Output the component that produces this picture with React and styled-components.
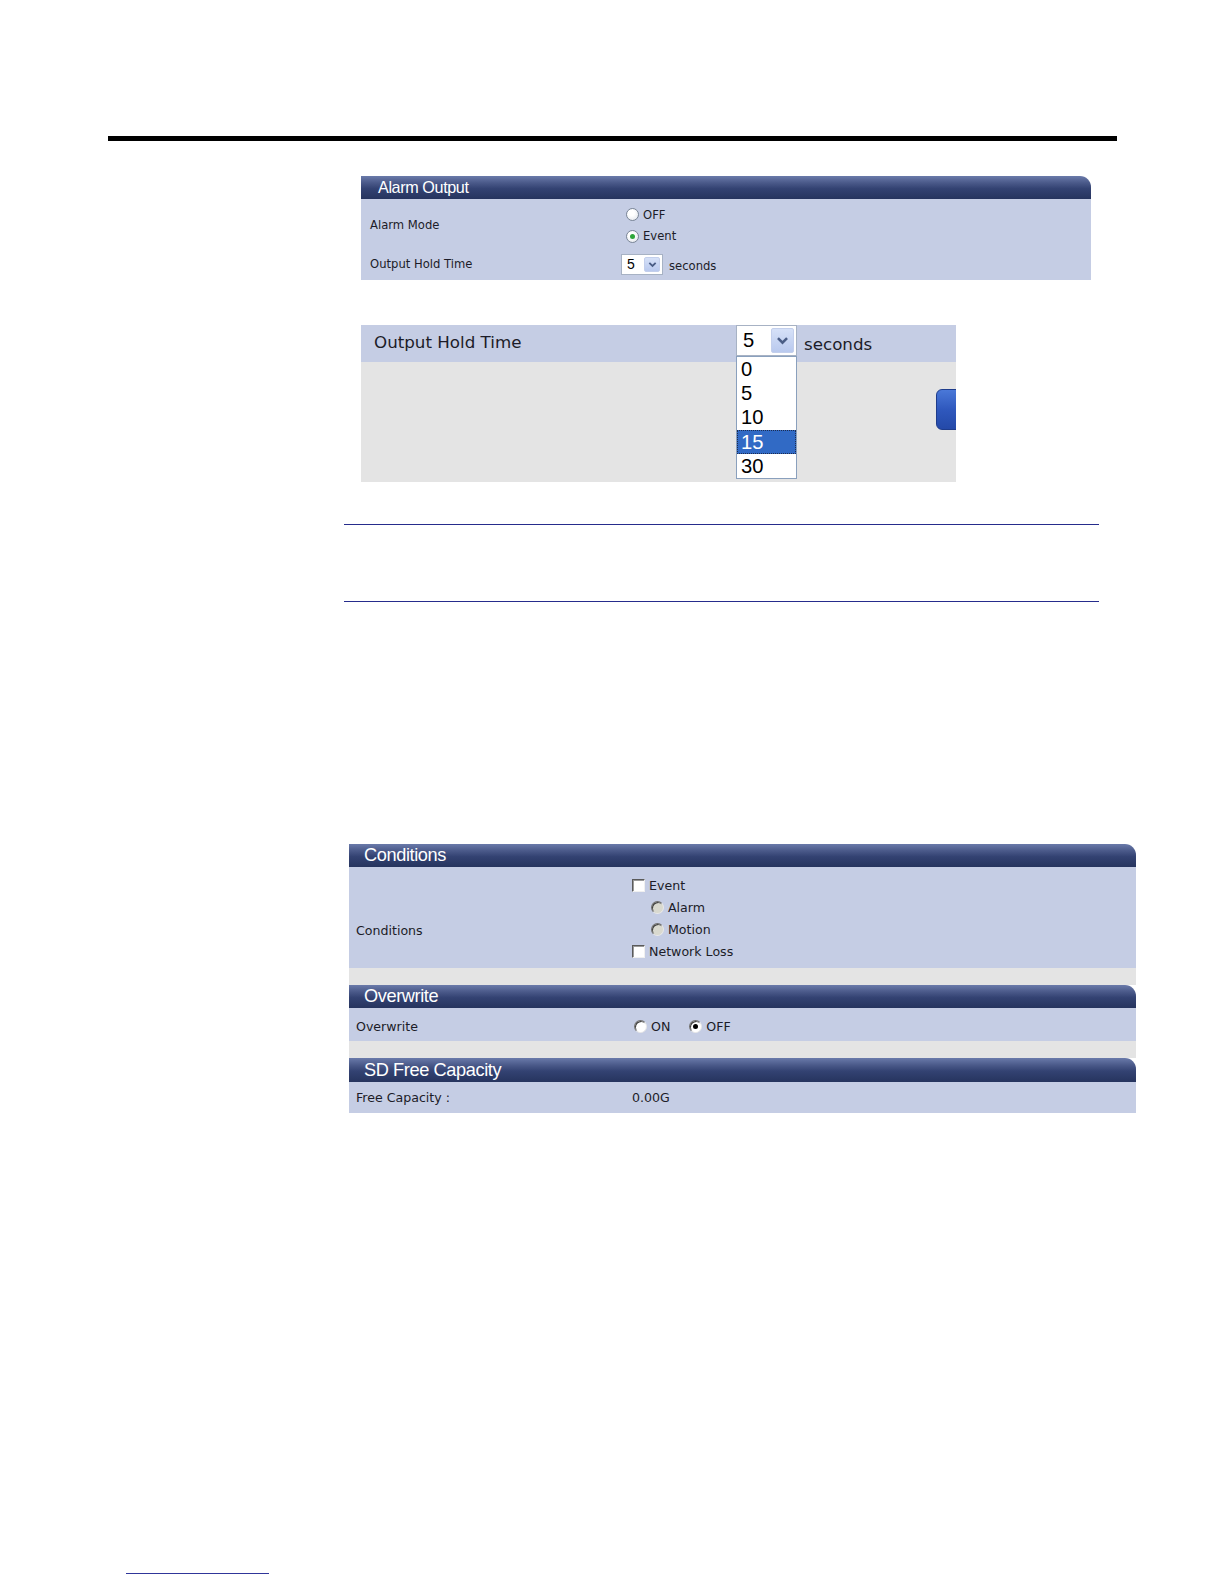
import React from "react";
import styled, { createGlobalStyle, css } from "styled-components";

const GlobalStyle = createGlobalStyle`
  html, body {
    margin: 0;
    padding: 0;
    background: #ffffff;
  }
`;

const Page = styled.div`
  width: 1224px;
  min-height: 1584px;
  padding-top: 136px;
  box-sizing: border-box;
  overflow: hidden;
`;

const TopRule = styled.div`
  margin-left: 108px;
  width: 1009px;
  height: 5px;
  background: #000;
`;

const Panel = styled.div`
  margin-left: ${p => p.left}px;
  margin-top: ${p => p.top}px;
  width: ${p => p.width}px;
  position: relative;
  overflow: ${p => (p.clip ? "hidden" : "visible")};
`;

const Header = styled.div`
  height: ${p => p.h || 23}px;
  line-height: ${p => p.h || 23}px;
  padding-left: ${p => p.indent || 15}px;
  border-top-right-radius: 11px;
  background: linear-gradient(#6a7aaa 0%, #4a5989 30%, #334272 55%, #26345e 100%);
  color: #fff;
  font-family: "Liberation Sans", Arial, sans-serif;
  font-size: ${p => p.size || 18.2}px;
  letter-spacing: -0.4px;
`;

const Body = styled.div`
  background: #c5cde4;
`;

const Row = styled.div`
  display: grid;
  grid-template-columns: ${p => p.labelWidth}px 1fr;
  align-items: center;
  height: ${p => p.h}px;
  padding-top: ${p => p.pt || 0}px;
  box-sizing: border-box;
`;

const Label = styled.div`
  padding-left: ${p => p.indent || 7}px;
  font-family: "DejaVu Sans", Verdana, sans-serif;
  font-size: ${p => p.size || 12.6}px;
  color: #1c1c28;
  align-self: ${p => (p.shift ? "start" : "center")};
  margin-top: ${p => p.shift || 0}px;
`;

const Options = styled.div`
  display: flex;
  flex-direction: ${p => (p.inline ? "row" : "column")};
  align-items: ${p => (p.inline ? "center" : "flex-start")};
  gap: ${p => (p.inline ? "19px" : "0")};
  padding-top: ${p => p.pt || 0}px;
  font-family: "DejaVu Sans", Verdana, sans-serif;
  font-size: ${p => p.size || 12.6}px;
  color: #1c1c28;
`;

const Option = styled.div`
  display: flex;
  align-items: center;
  gap: 4px;
  height: ${p => p.lh || 22.2}px;
  padding-left: ${p => p.indent || 0}px;
`;

const Radio = styled.span`
  position: relative;
  width: 13px;
  height: 13px;
  border-radius: 50%;
  box-sizing: border-box;
  flex: none;
  ${p =>
    p.classic
      ? css`
          border: 1px solid;
          border-color: #6e6e6e #e8e8e8 #e8e8e8 #6e6e6e;
          background: ${p.disabled ? "#d9d9cf" : "#fff"};
          box-shadow: inset 1px 1px 0 #404040;
        `
      : css`
          border: 1px solid #7a8596;
          background: radial-gradient(circle at 40% 35%, #ffffff 30%, #dde1e8 100%);
        `}
  &::after {
    content: "";
    display: ${p => (p.checked ? "block" : "none")};
    position: absolute;
    left: 50%;
    top: 50%;
    width: 5px;
    height: 5px;
    margin: -2.5px 0 0 -2.5px;
    border-radius: 50%;
    background: ${p => (p.classic ? "#000" : "#2fa63a")};
  }
`;

const Check = styled.span`
  width: 13px;
  height: 13px;
  box-sizing: border-box;
  flex: none;
  background: #fff;
  border: 1px solid;
  border-color: #5a5a5a #f0f0f0 #f0f0f0 #5a5a5a;
  box-shadow: inset 1px 1px 0 #9a9a9a;
`;

const SmallSelect = styled.div`
  display: flex;
  align-items: center;
  gap: 6px;
  font-family: "DejaVu Sans", Verdana, sans-serif;
  font-size: 11.6px;
  color: #1c1c28;
  & > span:last-child {
    padding-top: 3px;
  }
`;

const SelectBox = styled.div`
  position: relative;
  display: flex;
  align-items: center;
  justify-content: space-between;
  box-sizing: border-box;
  width: ${p => p.w}px;
  height: ${p => p.h}px;
  padding: ${p => p.pad}px;
  padding-left: ${p => p.padLeft}px;
  background: #fff;
  border: 1px solid #a7b2c4;
  font-family: "Liberation Sans", Arial, sans-serif;
  font-size: ${p => p.font}px;
  color: #000;
`;

const ArrowBtn = styled.span`
  display: flex;
  align-items: center;
  justify-content: center;
  width: ${p => p.w}px;
  height: 100%;
  border-radius: 2px;
  background: linear-gradient(#d6e1f8, #b9c9ee);
  border: 1px solid #c3cfec;
  box-sizing: border-box;
`;

const Chevron = ({ size }) => (
  <svg width={size} height={size} viewBox="0 0 10 10">
    <path d="M1.5 3.2 L5 6.6 L8.5 3.2" fill="none" stroke="#4a5d86" strokeWidth="2" />
  </svg>
);

const Seconds = styled.span`
  padding-left: 7px;
  font-family: "DejaVu Sans", Verdana, sans-serif;
  font-size: 16.7px;
  color: #1c1c28;
`;

const ZoomTop = styled.div`
  display: grid;
  grid-template-columns: 375px 61px 1fr;
  align-items: center;
  height: 37px;
  background: #c5cde4;
`;

const ZoomLabel = styled.div`
  padding-left: 13px;
  padding-bottom: 3px;
  font-family: "DejaVu Sans", Verdana, sans-serif;
  font-size: 16.7px;
  color: #1c1c28;
`;

const SelectCell = styled.div`
  position: relative;
  align-self: start;
`;

const List = styled.ul`
  position: absolute;
  left: 0;
  top: 31px;
  width: 61px;
  margin: 0;
  padding: 0;
  list-style: none;
  box-sizing: border-box;
  background: #fff;
  border: 1px solid #8aa0bd;
  z-index: 2;
`;

const Item = styled.li`
  height: 24.2px;
  line-height: 25px;
  padding-left: 4px;
  box-sizing: border-box;
  font-family: "Liberation Sans", Arial, sans-serif;
  font-size: 20.2px;
  color: ${p => (p.active ? "#fff" : "#000")};
  background: ${p => (p.active ? "#316ac5" : "transparent")};
  outline: ${p => (p.active ? "1px dotted #1c2c50" : "none")};
  outline-offset: -1px;
`;

const ZoomRest = styled.div`
  height: 120px;
  background: #e4e4e4;
  display: flex;
  justify-content: flex-end;
  padding-top: 27px;
  box-sizing: border-box;
`;

const BlueButton = styled.div`
  width: 80px;
  height: 39px;
  margin-right: -62px;
  border-radius: 6px;
  background: linear-gradient(#4a78d8, #2f58bd 50%, #2449a8);
  border: 1px solid #1e3c8c;
`;

const HRule = styled.div`
  margin-left: 344px;
  margin-top: ${p => p.top}px;
  width: 755px;
  height: 1px;
  background: #262c8c;
`;

const Strip = styled.div`
  height: 17px;
  background: #e4e4e4;
`;

const FootRule = styled.div`
  margin-left: 126px;
  margin-top: 460px;
  width: 143px;
  height: 1px;
  background: #30369a;
`;

export default function App() {
  return (
    <Page>
      <GlobalStyle />
      <TopRule />

      <Panel left={361} top={35} width={730}>
        <Header indent={17} size={16.2}>Alarm Output</Header>
        <Body>
          <Row labelWidth={265} h={49} pt={3}>
            <Label size={11.6} indent={9}>Alarm Mode</Label>
            <Options size={11.6} pt={1}>
              <Option lh={21.2}>
                <Radio />
                OFF
              </Option>
              <Option lh={21.2}>
                <Radio checked />
                Event
              </Option>
            </Options>
          </Row>
          <Row labelWidth={260} h={32}>
            <Label size={11.6} indent={9}>Output Hold Time</Label>
            <SmallSelect>
              <SelectBox w={42} h={21} pad={2} padLeft={5} font={14}>
                5
                <ArrowBtn w={16}>
                  <Chevron size={9} />
                </ArrowBtn>
              </SelectBox>
              <span>seconds</span>
            </SmallSelect>
          </Row>
        </Body>
      </Panel>

      <Panel left={361} top={45} width={595} clip>
        <ZoomTop>
          <ZoomLabel>Output Hold Time</ZoomLabel>
          <SelectCell>
            <SelectBox w={61} h={31} pad={2} padLeft={6} font={20.2}>
              5
              <ArrowBtn w={23}>
                <Chevron size={13} />
              </ArrowBtn>
            </SelectBox>
            <List>
              <Item>0</Item>
              <Item>5</Item>
              <Item>10</Item>
              <Item active>15</Item>
              <Item>30</Item>
            </List>
          </SelectCell>
          <Seconds>seconds</Seconds>
        </ZoomTop>
        <ZoomRest>
          <BlueButton />
        </ZoomRest>
      </Panel>

      <HRule top={42} />
      <HRule top={76} />

      <Panel left={349} top={242} width={787}>
        <Header>Conditions</Header>
        <Body>
          <Row labelWidth={283} h={101}>
            <Label shift={56}>Conditions</Label>
            <Options pt={2}>
              <Option>
                <Check />
                Event
              </Option>
              <Option indent={19}>
                <Radio classic disabled />
                Alarm
              </Option>
              <Option indent={19}>
                <Radio classic disabled />
                Motion
              </Option>
              <Option>
                <Check />
                Network Loss
              </Option>
            </Options>
          </Row>
        </Body>
        <Strip />
        <Header>Overwrite</Header>
        <Body>
          <Row labelWidth={285} h={33} pt={3}>
            <Label>Overwrite</Label>
            <Options inline>
              <Option>
                <Radio classic />
                ON
              </Option>
              <Option>
                <Radio classic checked />
                OFF
              </Option>
            </Options>
          </Row>
        </Body>
        <Strip />
        <Header h={24}>SD Free Capacity</Header>
        <Body>
          <Row labelWidth={283} h={31}>
            <Label>Free Capacity :</Label>
            <Options>0.00G</Options>
          </Row>
        </Body>
      </Panel>

      <FootRule />
    </Page>
  );
}
